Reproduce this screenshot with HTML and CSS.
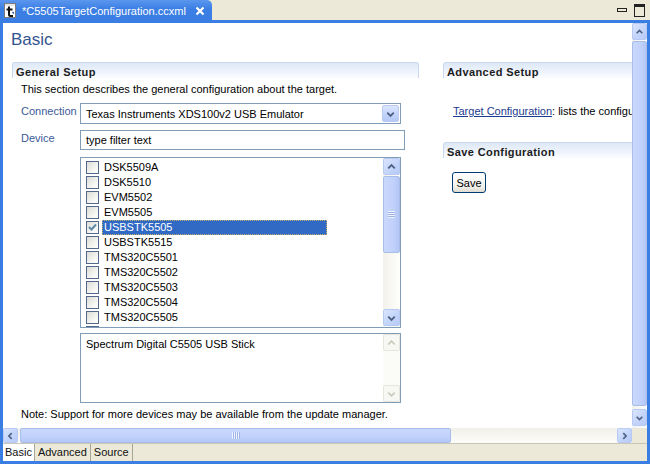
FILE: index.html
```html
<!DOCTYPE html>
<html>
<head>
<meta charset="utf-8">
<title>C5505TargetConfiguration.ccxml</title>
<link rel="stylesheet" href="styles.css">
</head>
<body>
<div class="window">
  <div class="tabbar">
    <div class="tab-active">
      <svg class="tab-icon" viewBox="0 0 14 16" width="14" height="16">
        <rect x="1.5" y="0.5" width="11" height="14" fill="#fff" stroke="#7d7d7d"/>
        <rect x="2" y="1" width="10" height="2" fill="#e6e6e6"/>
        <path d="M6 3.5 V11.5 Q6 13 7.5 13 H10" fill="none" stroke="#111" stroke-width="2"/>
        <path d="M3.5 6.5 H9.5" stroke="#111" stroke-width="2"/>
        <path d="M9.5 9 L11 10.5" stroke="#2a5db0" stroke-width="1.5"/>
      </svg>
      <span class="tab-title">*C5505TargetConfiguration.ccxml</span>
      <svg class="tab-close" viewBox="0 0 10 10" width="10" height="10">
        <path d="M1.5 1.5 L8.5 8.5 M8.5 1.5 L1.5 8.5" stroke="#fff" stroke-width="2.2"/>
      </svg>
    </div>
    <div class="tabbar-fill"></div>
    <div class="view-ctrls">
      <span class="min-btn"></span>
      <span class="max-btn"></span>
    </div>
  </div>

  <div class="frame">
    <div class="editor">
      <div class="content">
        <h1 class="form-title">Basic</h1>
        <div class="columns">
          <section class="col-left">
            <div class="sec-head">General Setup</div>
            <p class="sec-desc">This section describes the general configuration about the target.</p>
            <div class="form">
              <div class="row row-conn">
                <span class="label">Connection</span>
                <div class="combo">
                  <span class="combo-text">Texas Instruments XDS100v2 USB Emulator</span>
                  <span class="combo-btn">
                    <svg viewBox="0 0 16 16" width="16" height="16"><polyline points="4.5,6.5 8,10 11.5,6.5" fill="none" stroke="#4d6185" stroke-width="2"/></svg>
                  </span>
                </div>
              </div>
              <div class="row row-dev">
                <span class="label">Device</span>
                <div class="field">type filter text</div>
              </div>
              <div class="list">
                <div class="list-items">
                  <div class="item"><span class="cb"></span><span class="lbl">DSK5509A</span></div>
                  <div class="item"><span class="cb"></span><span class="lbl">DSK5510</span></div>
                  <div class="item"><span class="cb"></span><span class="lbl">EVM5502</span></div>
                  <div class="item"><span class="cb"></span><span class="lbl">EVM5505</span></div>
                  <div class="item"><span class="cb checked"><svg viewBox="0 0 11 11" width="11" height="11"><polyline points="2,5 4.5,7.5 9,2.5" fill="none" stroke="#5d88a8" stroke-width="2"/></svg></span><span class="lbl selected">USBSTK5505</span></div>
                  <div class="item"><span class="cb"></span><span class="lbl">USBSTK5515</span></div>
                  <div class="item"><span class="cb"></span><span class="lbl">TMS320C5501</span></div>
                  <div class="item"><span class="cb"></span><span class="lbl">TMS320C5502</span></div>
                  <div class="item"><span class="cb"></span><span class="lbl">TMS320C5503</span></div>
                  <div class="item"><span class="cb"></span><span class="lbl">TMS320C5504</span></div>
                  <div class="item"><span class="cb"></span><span class="lbl">TMS320C5505</span></div>
                  <div class="item"><span class="cb"></span></div>
                </div>
                <div class="vsb list-sb">
                  <span class="sb-btn"><svg viewBox="0 0 16 16" width="16" height="16"><polyline points="4.5,9.5 8,6 11.5,9.5" fill="none" stroke="#4d6185" stroke-width="2"/></svg></span>
                  <div class="sb-track">
                    <div class="sb-thumb list-thumb"><span class="grip-v"></span></div>
                  </div>
                  <span class="sb-btn"><svg viewBox="0 0 16 16" width="16" height="16"><polyline points="4.5,6.5 8,10 11.5,6.5" fill="none" stroke="#4d6185" stroke-width="2"/></svg></span>
                </div>
              </div>
              <div class="desc-box">
                <div class="desc-text">Spectrum Digital C5505 USB Stick</div>
                <div class="vsb desc-sb">
                  <span class="sb-btn disabled"><svg viewBox="0 0 16 16" width="16" height="16"><polyline points="4.5,9.5 8,6 11.5,9.5" fill="none" stroke="#c9c7ba" stroke-width="1.6"/></svg></span>
                  <div class="sb-track plain"></div>
                  <span class="sb-btn disabled"><svg viewBox="0 0 16 16" width="16" height="16"><polyline points="4.5,6.5 8,10 11.5,6.5" fill="none" stroke="#c9c7ba" stroke-width="1.6"/></svg></span>
                </div>
              </div>
            </div>
            <p class="note">Note: Support for more devices may be available from the update manager.</p>
          </section>

          <section class="col-right">
            <div class="sec-head">Advanced Setup</div>
            <p class="adv-text"><a class="link" href="#">Target Configuration</a>: lists the configuration and the connection of the target</p>
            <div class="sec-head save-head">Save Configuration</div>
            <button class="save-btn" type="button">Save</button>
          </section>
        </div>
      </div>

      <div class="vsb main-vsb">
        <span class="sb-btn"><svg viewBox="0 0 16 16" width="16" height="16"><polyline points="4.5,9.5 8,6 11.5,9.5" fill="none" stroke="#4d6185" stroke-width="2"/></svg></span>
        <div class="sb-track">
          <div class="sb-thumb main-thumb"></div>
        </div>
        <span class="sb-btn"><svg viewBox="0 0 16 16" width="16" height="16"><polyline points="4.5,6.5 8,10 11.5,6.5" fill="none" stroke="#4d6185" stroke-width="2"/></svg></span>
      </div>
    </div>

    <div class="hrow">
      <div class="hsb">
        <span class="sb-btn"><svg viewBox="0 0 16 16" width="16" height="16"><polyline points="9.5,4.5 6,8 9.5,11.5" fill="none" stroke="#4d6185" stroke-width="2"/></svg></span>
        <div class="sb-track h">
          <div class="sb-thumb h-thumb"><span class="grip-h"></span></div>
        </div>
        <span class="sb-btn"><svg viewBox="0 0 16 16" width="16" height="16"><polyline points="6.5,4.5 10,8 6.5,11.5" fill="none" stroke="#4d6185" stroke-width="2"/></svg></span>
      </div>
      <div class="corner"></div>
    </div>

    <div class="bottom-tabs">
      <span class="btab active">Basic</span>
      <span class="btab">Advanced</span>
      <span class="btab">Source</span>
    </div>
  </div>
</div>
</body>
</html>
```

FILE: styles.css
```css
* { box-sizing: border-box; }
html, body { margin: 0; padding: 0; }
body {
  width: 650px;
  height: 464px;
  overflow: hidden;
  font-family: "Liberation Sans", Arial, sans-serif;
  font-size: 11px;
  color: #000;
  background: #ece9d8;
}
.window { width: 650px; height: 464px; display: flex; flex-direction: column; }

/* top tab bar */
.tabbar { display: flex; height: 20px; background: #ece9d8; flex-shrink: 0; }
.tab-active {
  width: 212px;
  height: 20px;
  display: flex;
  align-items: center;
  padding-left: 3px;
  color: #fff;
  background: linear-gradient(#5b97ee, #3b7ee4 45%, #3a7de3);
  border-top-right-radius: 5px;
}
.tab-icon { flex-shrink: 0; margin-top: 2px; }
.tab-title { margin-left: 5px; font-size: 11px; line-height: 14px; margin-top: 1px; white-space: nowrap; }
.tab-close { margin-left: 9px; margin-top: 1px; }
.tabbar-fill { flex: 1; }
.view-ctrls { display: flex; align-items: flex-start; padding-right: 5px; }
.min-btn { width: 10px; height: 4px; border: 1px solid #222; margin-top: 8px; margin-right: 7px; }
.max-btn { width: 11px; height: 13px; border: 1px solid #222; border-top-width: 3px; margin-top: 4px; }

/* editor frame */
.frame {
  height: 444px;
  border: 3px solid #3a7de3;
  display: flex;
  flex-direction: column;
  background: #ece9d8;
}
.editor { height: 405px; display: flex; flex-shrink: 0; }
.content { width: 629px; height: 405px; overflow: hidden; background: #fff; flex-shrink: 0; }

.form-title {
  margin: 0;
  padding: 7px 0 0 8px;
  height: 39px;
  font-size: 17px;
  line-height: 20px;
  font-weight: normal;
  color: #33548f;
}
.columns { display: flex; padding-left: 9px; gap: 24px; }
.col-left { width: 407px; flex-shrink: 0; }
.col-right { width: 260px; flex-shrink: 0; }

.sec-head {
  height: 16px;
  padding: 2px 0 0 3px;
  line-height: 14px;
  font-weight: bold;
  letter-spacing: 0.4px;
  color: #1c1c1c;
  border: 1px solid #c9d8ee;
  border-bottom: none;
  border-radius: 3px 3px 0 0;
  background: linear-gradient(#dde8f7, #f2f6fc 70%, #fbfcfe);
  white-space: nowrap;
}
.sec-desc { margin: 4px 0 0 0; padding-left: 9px; line-height: 14px; white-space: nowrap; }

.form { padding-left: 9px; margin-top: 7px; }
.row { display: flex; align-items: flex-start; }
.label { width: 59px; flex-shrink: 0; color: #3b5a9a; line-height: 14px; padding-top: 1px; }
.row-conn { height: 21px; }
.row-dev { height: 20px; margin-top: 6px; }

.combo {
  width: 321px;
  height: 21px;
  border: 1px solid #7f9db9;
  display: flex;
  align-items: center;
  background: #fff;
}
.combo-text { flex: 1; padding-left: 5px; line-height: 14px; white-space: nowrap; }
.combo-btn {
  width: 17px;
  height: 17px;
  margin-right: 1px;
  border: 1px solid #b9cbf3;
  border-radius: 2px;
  background: linear-gradient(#dbe5fd, #c1d3fb 60%, #b4c8f6);
  display: flex;
  align-items: center;
  justify-content: center;
}
.field {
  width: 325px;
  height: 20px;
  border: 1px solid #7f9db9;
  padding-left: 5px;
  line-height: 18px;
  background: #fff;
}

.list {
  margin: 7px 0 0 59px;
  width: 321px;
  height: 171px;
  border: 1px solid #7f9db9;
  display: flex;
  background: #fff;
}
.list-items { flex: 1; padding-top: 2px; overflow: hidden; }
.item { display: flex; align-items: center; height: 15px; padding-left: 5px; }
.cb {
  width: 13px;
  height: 13px;
  flex-shrink: 0;
  border: 1px solid #52688c;
  background: linear-gradient(135deg, #dcdcd6, #f4f4f0 60%, #fff);
  display: flex;
  align-items: center;
  justify-content: center;
}
.lbl { margin-left: 3px; padding-left: 2px; line-height: 15px; height: 15px; white-space: nowrap; }
.lbl.selected {
  width: 225px;
  background: #316ac5;
  color: #fff;
  outline: 1px dotted #c9b36a;
  outline-offset: -1px;
}

/* scrollbars */
.vsb { display: flex; flex-direction: column; flex-shrink: 0; background: #f6f6f2; }
.list-sb { width: 17px; padding: 0 0 1px 0; }
.desc-sb { width: 17px; }
.main-vsb { width: 15px; height: 405px; background: linear-gradient(90deg, #eef1f8, #fdfdff); padding-bottom: 2px; }
.sb-btn {
  flex-shrink: 0;
  width: 100%;
  height: 17px;
  border: 1px solid #b7caf4;
  border-radius: 2px;
  background: linear-gradient(135deg, #dbe5fd, #c4d5fb 55%, #b7caf6);
  display: flex;
  align-items: center;
  justify-content: center;
}
.sb-btn.disabled { background: #f7f7f3; border-color: #e7e6de; }
.sb-track { flex: 1; display: flex; flex-direction: column; background: linear-gradient(90deg, #f2f1ec, #fefefb); }
.sb-track.plain { background: #fbfbf8; }
.sb-thumb {
  border: 1px solid #a9bde9;
  border-radius: 2px;
  background: linear-gradient(90deg, #cad8fc, #c0d1fb 60%, #b4c7f5);
  display: flex;
  align-items: center;
  justify-content: center;
}
.list-thumb { height: 77px; margin-top: 1px; }
.main-thumb { flex: 1; margin: 1px 0 3px 0; }
.grip-v {
  width: 7px;
  height: 7px;
  background: repeating-linear-gradient(#eef3fe 0 1px, #9fb4e6 1px 2px);
}
.grip-h {
  width: 8px;
  height: 7px;
  background: repeating-linear-gradient(90deg, #eef3fe 0 1px, #9fb4e6 1px 2px);
}

.desc-box {
  margin: 5px 0 0 59px;
  width: 321px;
  height: 70px;
  border: 1px solid #7f9db9;
  display: flex;
  background: #fff;
}
.desc-text { flex: 1; padding: 3px 0 0 5px; line-height: 14px; }

.note { margin: 4px 0 0 0; padding-left: 9px; line-height: 14px; white-space: nowrap; }

/* right column */
.adv-text { margin: 26px 0 0 0; padding-left: 10px; line-height: 14px; white-space: nowrap; }
.link { color: #1b3c8e; text-decoration: underline; }
.save-head { margin-top: 24px; }
.save-btn {
  margin: 14px 0 0 9px;
  width: 34px;
  height: 21px;
  padding: 0;
  font-family: "Liberation Sans", Arial, sans-serif;
  font-size: 11px;
  color: #000;
  border: 1px solid #003c74;
  border-radius: 3px;
  background: linear-gradient(#ffffff, #f2f2ec 70%, #dedbd0);
}

/* horizontal scrollbar row */
.hrow { display: flex; height: 15px; flex-shrink: 0; }
.hsb { width: 629px; height: 15px; display: flex; background: linear-gradient(#f2f1ec, #fefefb); }
.hsb .sb-btn { width: 15px; height: 15px; }
.sb-track.h { flex-direction: row; background: linear-gradient(#f1f0ea, #fcfcf9); padding: 0 0 0 2px; }
.h-thumb { width: 431px; height: 15px; background: linear-gradient(#cad8fc, #c0d1fb 60%, #b4c7f5); }
.corner { width: 15px; height: 15px; background: #ece9d8; }

/* bottom tabs */
.bottom-tabs { display: flex; height: 18px; flex-shrink: 0; background: #ece9d8; border-top: 1px solid #c9c6b6; }
.btab {
  padding: 0 3px;
  line-height: 17px;
  border-right: 1px solid #a7a595;
  color: #111;
}
.btab.active { background: #fff; padding: 0 2px 0 2px; }
```
